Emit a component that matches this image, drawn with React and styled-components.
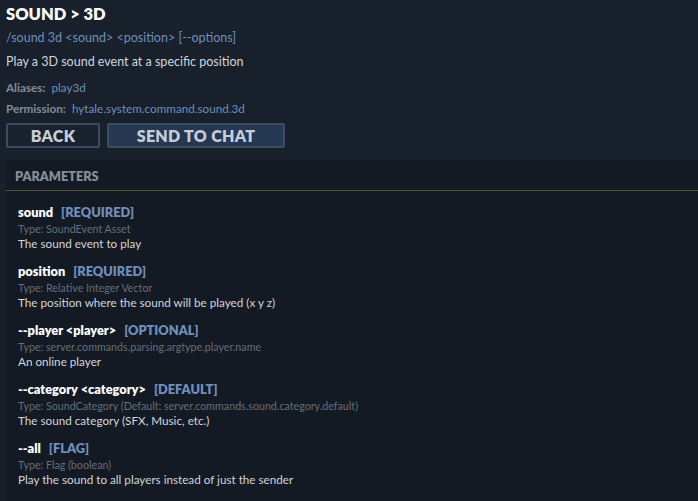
import React from "react";
import styled, { createGlobalStyle } from "styled-components";

const Global = createGlobalStyle`
  html, body { margin: 0; padding: 0; background: #17202b; }
  body { font-family: "Lato", "Noto Sans", sans-serif; overflow: hidden; }
`;

const Page = styled.div`
  width: 698px;
  height: 501px;
  box-sizing: border-box;
  padding: 4px 0 0 6px;
  display: flex;
  flex-direction: column;
  background: #17202b;
  overflow: hidden;
`;

const Title = styled.h1`
  margin: 0;
  font-size: 16.5px;
  font-weight: 800;
  color: #ffffff;
  line-height: 20px;
`;

const Usage = styled.div`
  margin-top: 7px;
  font-size: 12.5px;
  color: #6e8fbd;
  line-height: 14px;
`;

const Desc = styled.div`
  margin-top: 10px;
  font-size: 12.5px;
  color: #d2d6dc;
  line-height: 14px;
`;

const Meta = styled.div`
  margin-top: ${p => p.$top}px;
  font-size: 11.7px;
  line-height: 13px;
  display: flex;
  gap: 6px;
`;

const MetaLabel = styled.span`
  font-weight: 700;
  color: #858d98;
`;

const MetaValue = styled.span`
  color: #6e8fbd;
`;

const Buttons = styled.div`
  margin-top: 8px;
  display: flex;
  gap: 7px;
`;

const Button = styled.button`
  width: ${p => p.$w}px;
  height: 25px;
  box-sizing: border-box;
  border: 2px solid #3b4b60;
  border-radius: 2px;
  background: ${p => (p.$primary ? "#253751" : "#19222e")};
  color: #c5ced8;
  font-family: inherit;
  font-weight: 800;
  font-size: 16px;
  letter-spacing: 0.3px;
  line-height: 21px;
  padding: 0;
`;

const Panel = styled.section`
  margin-top: 12px;
  flex: 1;
  background: #131a23;
  display: flex;
  flex-direction: column;
`;

const PanelHeader = styled.div`
  height: 31px;
  box-sizing: border-box;
  padding: 9px 0 0 9px;
  font-size: 12.7px;
  line-height: 15px;
  font-weight: 800;
  color: #868e98;
  border-bottom: 1px solid #5b5637;
`;

const Params = styled.div`
  padding: 13px 0 0 12px;
  display: flex;
  flex-direction: column;
  gap: 13px;
`;

const Param = styled.div`
  display: flex;
  flex-direction: column;
`;

const NameRow = styled.div`
  display: flex;
  gap: 8px;
  font-size: 12.8px;
  font-weight: 800;
  line-height: 17px;
`;

const Name = styled.span`
  color: #ffffff;
`;

const Tag = styled.span`
  color: #6e8fbd;
`;

const TypeLine = styled.div`
  font-size: 10.7px;
  color: #656e79;
  line-height: 15px;
`;

const ParamDesc = styled.div`
  font-size: 11.7px;
  color: #d2d6dc;
  line-height: 14px;
`;

const params = [
  { name: "sound", tag: "[REQUIRED]", type: "Type: SoundEvent Asset", desc: "The sound event to play" },
  { name: "position", tag: "[REQUIRED]", type: "Type: Relative Integer Vector", desc: "The position where the sound will be played (x y z)" },
  { name: "--player <player>", tag: "[OPTIONAL]", type: "Type: server.commands.parsing.argtype.player.name", desc: "An online player" },
  { name: "--category <category>", tag: "[DEFAULT]", type: "Type: SoundCategory (Default: server.commands.sound.category.default)", desc: "The sound category (SFX, Music, etc.)" },
  { name: "--all", tag: "[FLAG]", type: "Type: Flag (boolean)", desc: "Play the sound to all players instead of just the sender" },
];

export default function App() {
  return (
    <>
      <Global />
      <Page>
        <Title>SOUND &gt; 3D</Title>
        <Usage>/sound 3d &lt;sound&gt; &lt;position&gt; [--options]</Usage>
        <Desc>Play a 3D sound event at a specific position</Desc>
        <Meta $top={12}>
          <MetaLabel>Aliases:</MetaLabel>
          <MetaValue>play3d</MetaValue>
        </Meta>
        <Meta $top={8}>
          <MetaLabel>Permission:</MetaLabel>
          <MetaValue>hytale.system.command.sound.3d</MetaValue>
        </Meta>
        <Buttons>
          <Button $w={94}>BACK</Button>
          <Button $w={178} $primary>SEND TO CHAT</Button>
        </Buttons>
        <Panel>
          <PanelHeader>PARAMETERS</PanelHeader>
          <Params>
            {params.map(p => (
              <Param key={p.name}>
                <NameRow>
                  <Name>{p.name}</Name>
                  <Tag>{p.tag}</Tag>
                </NameRow>
                <TypeLine>{p.type}</TypeLine>
                <ParamDesc>{p.desc}</ParamDesc>
              </Param>
            ))}
          </Params>
        </Panel>
      </Page>
    </>
  );
}
